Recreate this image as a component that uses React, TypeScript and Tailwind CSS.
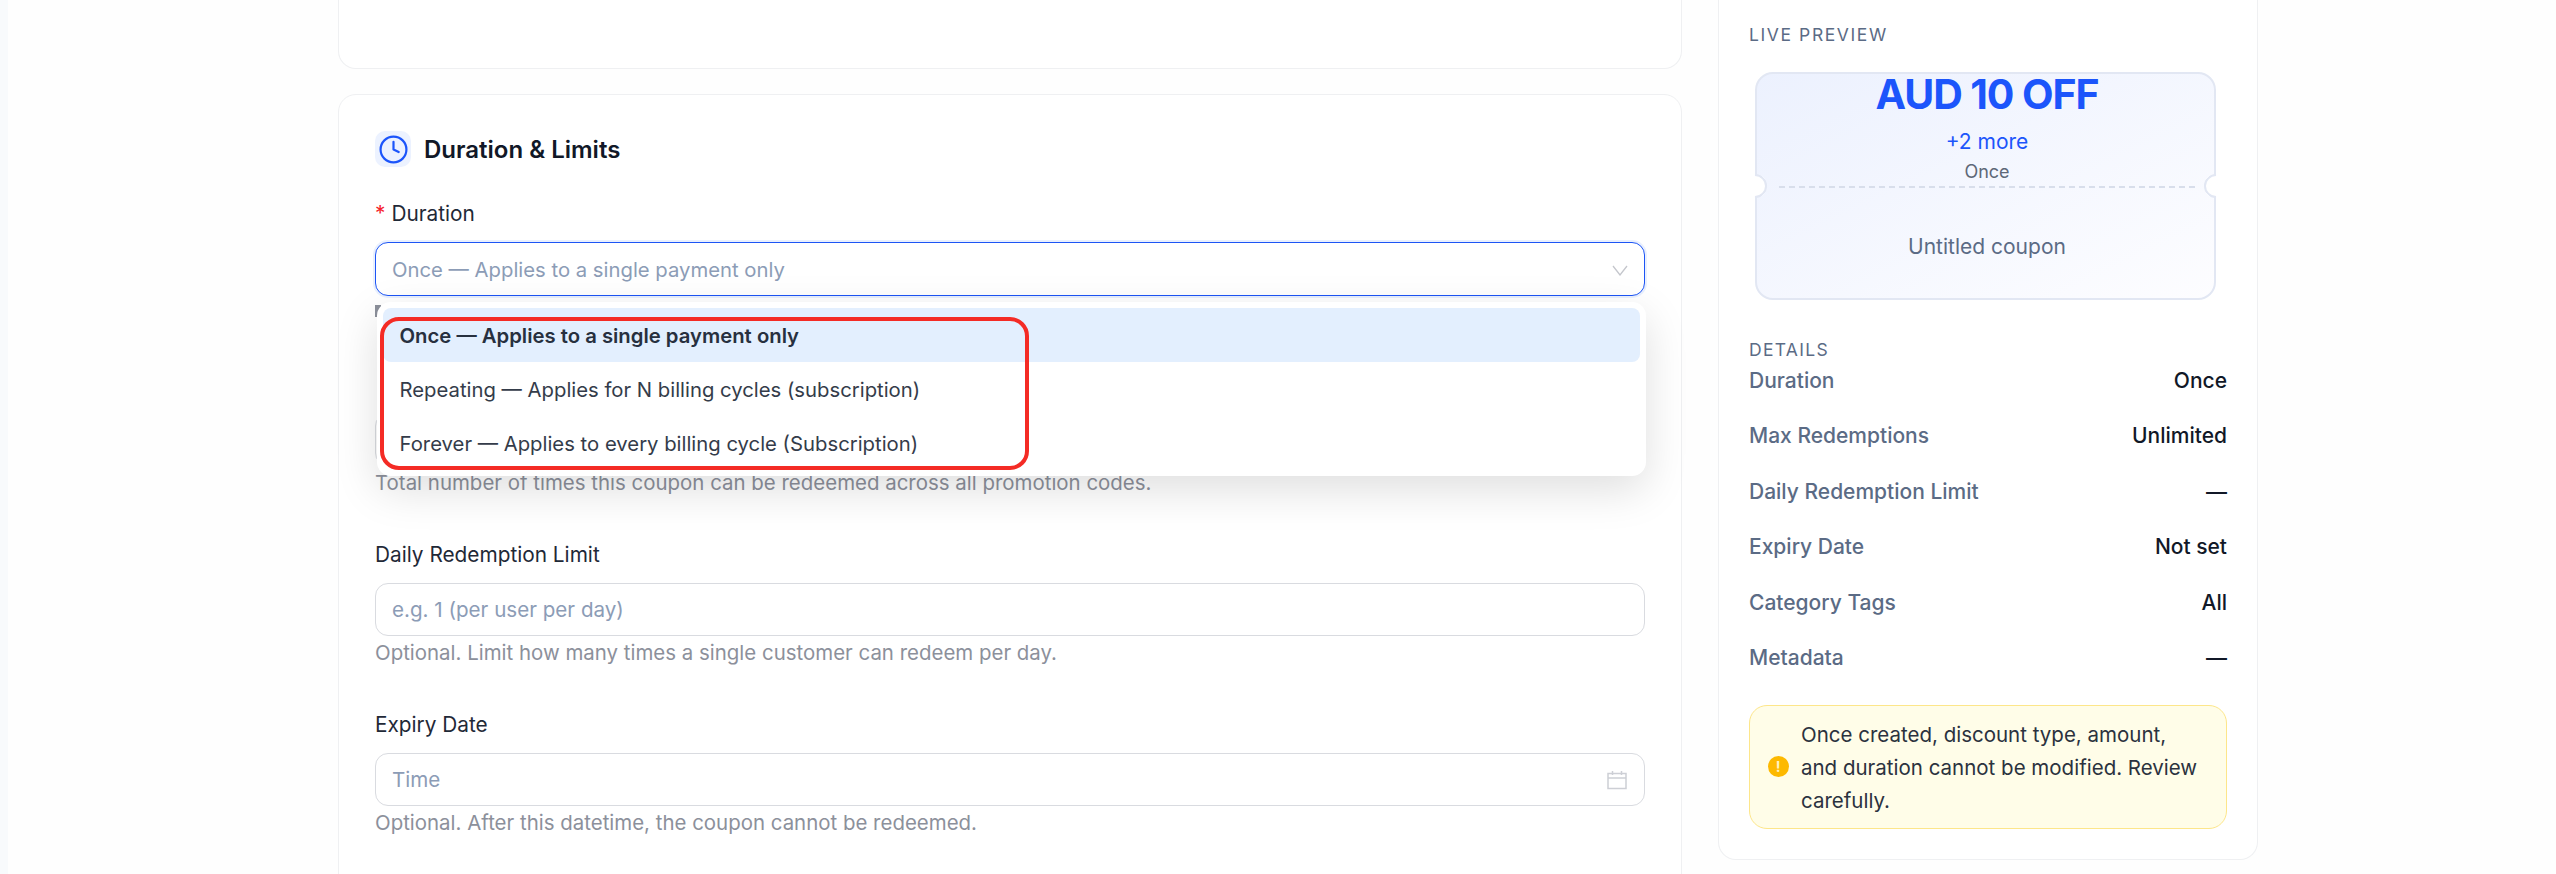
import { Clock } from "lucide-react";

const details = [
  { label: "Duration", value: "Once" },
  { label: "Max Redemptions", value: "Unlimited" },
  { label: "Daily Redemption Limit", value: "—" },
  { label: "Expiry Date", value: "Not set" },
  { label: "Category Tags", value: "All" },
  { label: "Metadata", value: "—" },
];

const durationOptions = [
  "Once — Applies to a single payment only",
  "Repeating — Applies for N billing cycles (subscription)",
  "Forever — Applies to every billing cycle (Subscription)",
];

function Label({ children, required }: { children?: string; required?: boolean }) {
  return (
    <div className="h-[28px] text-[20.8px] leading-[28px] text-[#1f2937]">
      {required && <span className="mr-[6px] text-[#f5222d]">*</span>}
      {children}
    </div>
  );
}

function Help({ children }: { children: string }) {
  return <div className="mt-[4px] h-[26px] text-[20.45px] leading-[26px] text-[#8c909b]">{children}</div>;
}

function TextField({ placeholder, children }: { placeholder?: string; children?: React.ReactNode }) {
  return (
    <div className="mt-[14px] flex h-[53px] items-center justify-between rounded-[13px] border border-[#d9dbe0] bg-white pl-[16px] pr-[17px] pt-[1px] text-[20.6px] text-[#8c9cb6]">
      <span>{placeholder}</span>
      {children}
    </div>
  );
}

function DurationDropdown() {
  return (
    <div className="absolute left-[1.5px] top-[102px] z-10 h-[174px] w-[1269px] rounded-[14px] bg-white p-[6px] shadow-[0_14px_44px_rgba(0,0,0,0.13)]">
      {durationOptions.map((option, i) => (
        <div
          key={option}
          className={
            i === 0
              ? "flex h-[54px] items-center rounded-[8px] bg-[#e3effe] pl-[17px] pt-[2px] text-[20.3px] font-semibold text-[#27303f]"
              : "flex h-[54px] items-center pl-[17px] pt-[2px] text-[20.3px] text-[#343c4a]"
          }
        >
          {option}
        </div>
      ))}
      {/* red annotation around the options */}
      <div className="absolute left-[3.5px] top-[15px] h-[153px] w-[649px] rounded-[19px] border-[4px] border-[#f42b25]" />
    </div>
  );
}

function CouponPreview() {
  return (
    <div className="relative ml-[6px] mt-[25px] flex h-[228px] w-[461px] flex-col items-center rounded-[18px] border-2 border-[#e2e7f3] bg-gradient-to-br from-[#ecf1fe] to-[#fdfdff] pl-[3px]">
      <div className="h-[40px] text-[41px] font-bold leading-[40px] tracking-[-1.1px] text-[#1c55fb]">AUD 10 OFF</div>
      <div className="mt-[14px] text-[21px] leading-[28px] text-[#1c55fb]">+2 more</div>
      <div className="mt-[4px] text-[18px] leading-[24px] text-[#5e6878]">Once</div>
      <div className="mt-[2px] h-0 w-[416px] border-t-2 border-dashed border-[#d8deeb]" />
      <div className="mt-[45px] text-[21px] leading-[28px] text-[#5b6b85]">Untitled coupon</div>
      <div className="absolute -left-[14px] top-[100px] h-[24px] w-[24px] rotate-45 rounded-full border-2 border-transparent border-r-[#e2e7f3] border-t-[#e2e7f3] bg-white" />
      <div className="absolute -right-[14px] top-[100px] h-[24px] w-[24px] rotate-45 rounded-full border-2 border-transparent border-b-[#e2e7f3] border-l-[#e2e7f3] bg-white" />
    </div>
  );
}

export default function App() {
  return (
    <div className="flex h-[874px] justify-center overflow-hidden bg-[#fefefe] font-['Inter',sans-serif]">
      <div className="h-full w-[8px] bg-[#f8fafc]" />
      <div className="ml-[330px] w-[1344px]">
        <div className="h-[69px] rounded-b-[18px] border border-t-0 border-[#eff0f2] bg-white" />
        <div className="mt-[25px] h-[900px] rounded-[18px] border border-[#eff0f2] bg-white px-[36px] pt-[36px]">
          <div className="flex items-center gap-[13px]">
            <div className="flex h-[36px] w-[36px] items-center justify-center rounded-[10px] bg-[#ecf2ff]">
              <Clock className="h-[31px] w-[31px] text-[#1c55fb]" strokeWidth={1.7} />
            </div>
            <div className="pt-[1px] text-[24px] font-semibold leading-[32px] text-[#111827]">Duration &amp; Limits</div>
          </div>

          <div className="relative mt-[33px]">
            <Label required>Duration</Label>
            <div className="mt-[14px] flex h-[54px] items-center justify-between rounded-[13px] border-[1.5px] border-[#1d55f5] bg-white pl-[16px] pr-[16px] pt-[2px] text-[20.3px] text-[#8c9cb6] shadow-[0_0_0_2px_#e9f0fe]">
              <span>{durationOptions[0]}</span>
              <svg viewBox="0 0 16 11" className="h-[11px] w-[16px]" fill="none" stroke="#c4c6cc" strokeWidth="1.3">
                <path d="M1 1l7 9 7-9" />
              </svg>
            </div>
            {/* top of the hidden helper line, poking out at the dropdown's corner */}
            <div className="mt-[9px] h-[12px] w-[6px] bg-[#8c909b]" />
            <div className="h-[9px]" />
            <DurationDropdown />
          </div>

          <div className="mt-[45px]">
            <Label />
            <TextField />
            <Help>Total number of times this coupon can be redeemed across all promotion codes.</Help>
          </div>

          <div className="mt-[45px]">
            <Label>Daily Redemption Limit</Label>
            <TextField placeholder="e.g. 1 (per user per day)" />
            <Help>Optional. Limit how many times a single customer can redeem per day.</Help>
          </div>

          <div className="mt-[45px]">
            <Label>Expiry Date</Label>
            <TextField placeholder="Time">
              <svg viewBox="0 0 20 20" className="h-[20px] w-[20px]" fill="none" stroke="#cdcfd5" strokeWidth="1.5">
                <path d="M1 3.5h18v15H1zM1 8h18M5.5 1v4M14.5 1v4" />
              </svg>
            </TextField>
            <Help>Optional. After this datetime, the coupon cannot be redeemed.</Help>
          </div>
        </div>
      </div>

      <div className="ml-[36px] mr-[298px] h-[860px] w-[540px] rounded-b-[18px] border border-t-0 border-[#eff0f2] bg-white px-[30px] pt-[23px]">
        <div className="text-[17.5px] leading-[24px] tracking-[1.6px] text-[#5b6b85]">LIVE PREVIEW</div>
        <CouponPreview />
        <div className="mt-[38px] text-[17.5px] leading-[24px] tracking-[1.3px] text-[#5b6b85]">DETAILS</div>
        <div className="mt-[5px] flex flex-col gap-[27.4px]">
          {details.map((row) => (
            <div key={row.label} className="flex justify-between text-[21px] font-medium leading-[28px]">
              <span className="text-[#5b6b85]">{row.label}</span>
              <span className="text-[#111827]">{row.value}</span>
            </div>
          ))}
        </div>
        <div className="mt-[33px] flex h-[124px] items-center gap-[12.5px] rounded-[18px] border border-[#fde68a] bg-[#fffde8] pl-[17.5px] pr-[20px]">
          <div className="flex h-[21px] w-[21px] shrink-0 items-center justify-center rounded-full bg-[#fdb900] text-[14px] font-bold leading-none text-[#fff3c4]">!</div>
          <div className="pt-[2px] text-[20.5px] leading-[33px] text-[#2b323e]">
            Once created, discount type, amount, and duration cannot be modified. Review carefully.
          </div>
        </div>
      </div>
    </div>
  );
}
